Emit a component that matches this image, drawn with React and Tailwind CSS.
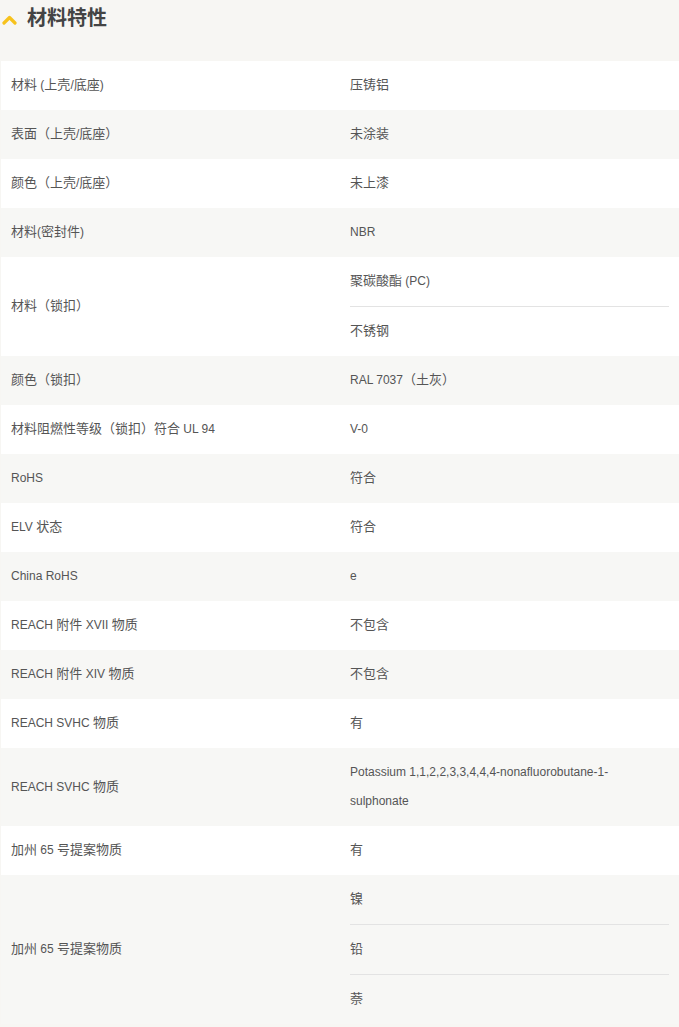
import React from 'react';

const rows = [
  ['材料 (上壳/底座)', ['压铸铝']],
  ['表面（上壳/底座）', ['未涂装']],
  ['颜色（上壳/底座）', ['未上漆']],
  ['材料(密封件)', ['NBR']],
  ['材料（锁扣）', ['聚碳酸酯 (PC)', '不锈钢']],
  ['颜色（锁扣）', ['RAL 7037（土灰）']],
  ['材料阻燃性等级（锁扣）符合 UL 94', ['V-0']],
  ['RoHS', ['符合']],
  ['ELV 状态', ['符合']],
  ['China RoHS', ['e']],
  ['REACH 附件 XVII 物质', ['不包含']],
  ['REACH 附件 XIV 物质', ['不包含']],
  ['REACH SVHC 物质', ['有']],
  ['REACH SVHC 物质', ['Potassium 1,1,2,2,3,3,4,4,4-nonafluorobutane-1-sulphonate']],
  ['加州 65 号提案物质', ['有']],
  ['加州 65 号提案物质', ['镍', '铅', '萘']],
];

// CJK glyphs sit a bit larger than the latin text in the source page
function Mixed({ text }) {
  const parts = text.split(/([\u3000-\u9fff\uff00-\uffef]+)/).filter(Boolean);
  return parts.map((p, i) =>
    /[\u3000-\u9fff\uff00-\uffef]/.test(p) ? (
      <span key={i} className="text-[13px] leading-none">{p}</span>
    ) : (
      <span key={i}>{p}</span>
    )
  );
}

export default function App() {
  return (
    <div
      className="min-h-screen bg-[#f7f6f3] text-[#555]"
      style={{ fontFamily: '"Liberation Sans", "Noto Sans CJK SC", sans-serif' }}
    >
      <div className="h-[61px] flex items-start pt-[5px] pl-[2px]">
        <svg width="15" height="10" viewBox="0 0 15 10" className="mt-[10px]">
          <path d="M2 8 L7.5 2.5 L13 8" fill="none" stroke="#f7c21c" strokeWidth="3.2" strokeLinecap="round" strokeLinejoin="round" />
        </svg>
        <h2 className="ml-[10px] text-[20px] leading-[26px] font-bold text-[#444]">材料特性</h2>
      </div>
      <div className="ml-[1px]">
        {rows.map(([label, values], i) => (
          <div key={i} className={`flex ${i % 2 === 0 ? 'bg-white' : 'bg-[#f7f7f5]'}`}>
            <div className="w-[339px] px-[10px] flex items-center text-[12px] leading-[29px] py-[10px]">
              <div><Mixed text={label} /></div>
            </div>
            <div className="flex-1 px-[10px]">
              {values.map((v, j) => (
                <div
                  key={j}
                  className={`py-[10px] text-[12px] leading-[29px] ${j < values.length - 1 ? 'border-b border-[#e3e3e3]' : ''}`}
                >
                  <div className="max-w-[295px]"><Mixed text={v} /></div>
                </div>
              ))}
            </div>
          </div>
        ))}
      </div>
    </div>
  );
}
